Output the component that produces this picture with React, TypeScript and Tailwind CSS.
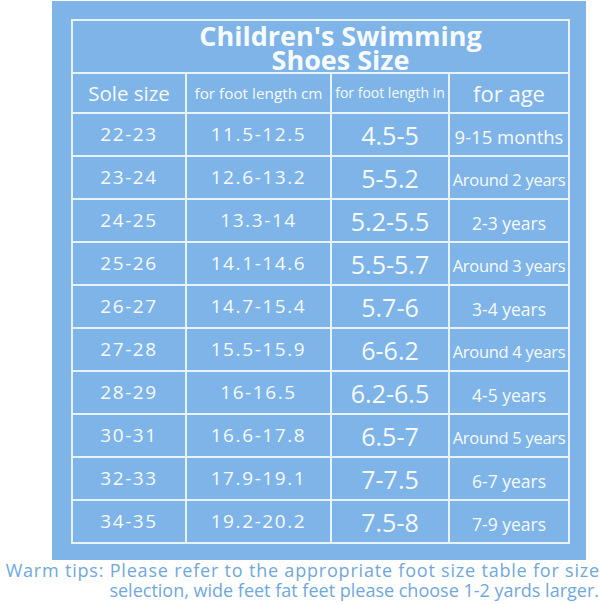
const rows: [string, string, string, string][] = [
  ["22-23", "11.5-12.5", "4.5-5", "9-15 months"],
  ["23-24", "12.6-13.2", "5-5.2", "Around 2 years"],
  ["24-25", "13.3-14", "5.2-5.5", "2-3 years"],
  ["25-26", "14.1-14.6", "5.5-5.7", "Around 3 years"],
  ["26-27", "14.7-15.4", "5.7-6", "3-4 years"],
  ["27-28", "15.5-15.9", "6-6.2", "Around 4 years"],
  ["28-29", "16-16.5", "6.2-6.5", "4-5 years"],
  ["30-31", "16.6-17.8", "6.5-7", "Around 5 years"],
  ["32-33", "17.9-19.1", "7-7.5", "6-7 years"],
  ["34-35", "19.2-20.2", "7.5-8", "7-9 years"],
];

const cell = "border-2 border-[#e8f2fc] p-0 text-center align-middle leading-[1.2]";

function ageSize(age: string) {
  if (age.startsWith("Around")) return "text-[16.5px] tracking-[-0.3px]";
  if (age.includes("months")) return "text-[18.5px]";
  return "text-[17.5px]";
}

export default function App() {
  return (
    <div className="w-[600px] h-[604px] bg-white overflow-hidden font-['Open_Sans','Noto_Sans',sans-serif] text-[#f7fbff]">
      <div className="ml-[52px] mt-[1px] w-[534px] h-[559px] bg-[#7eb4e8] pt-[18px] pl-[19px]">
        <table className="border-collapse table-fixed w-[497px]">
          <colgroup>
            <col className="w-[114px]" />
            <col className="w-[145px]" />
            <col className="w-[118px]" />
            <col className="w-[120px]" />
          </colgroup>
          <tbody>
            <tr className="h-[53px]">
              <td colSpan={4} className={cell}>
                <div className="pl-[40px] pt-[2px] text-[27px] font-bold leading-[24px]">
                  Children's Swimming
                  <br />
                  Shoes Size
                </div>
              </td>
            </tr>
            <tr className="h-[40px]">
              <td className={`${cell} text-[20.5px]`}>Sole size</td>
              <td className={`${cell} text-[15.3px] whitespace-nowrap`}>for foot length cm</td>
              <td className={`${cell} text-[14px] whitespace-nowrap`}>for foot length in</td>
              <td className={`${cell} text-[22px]`}>for age</td>
            </tr>
            {rows.map(([sole, cm, inch, age]) => (
              <tr key={sole} className="h-[43px]">
                <td className={`${cell} text-[19px] tracking-[1.6px] font-medium`}>{sole}</td>
                <td className={`${cell} text-[19px] tracking-[1.6px] font-medium whitespace-nowrap`}>{cm}</td>
                <td className={`${cell} text-[25px] pt-[1px]`}>{inch}</td>
                <td className={`${cell} ${ageSize(age)} pt-[5px] whitespace-nowrap`}>{age}</td>
              </tr>
            ))}
          </tbody>
        </table>
      </div>
      <div className="text-right text-[18px] leading-[20px] text-[#6fa8dc] whitespace-nowrap">
        <div className="tracking-[0.8px]">Warm tips: Please refer to the appropriate foot size table for size</div>
        <div className="pr-[1px]">selection, wide feet fat feet please choose 1-2 yards larger.</div>
      </div>
    </div>
  );
}
